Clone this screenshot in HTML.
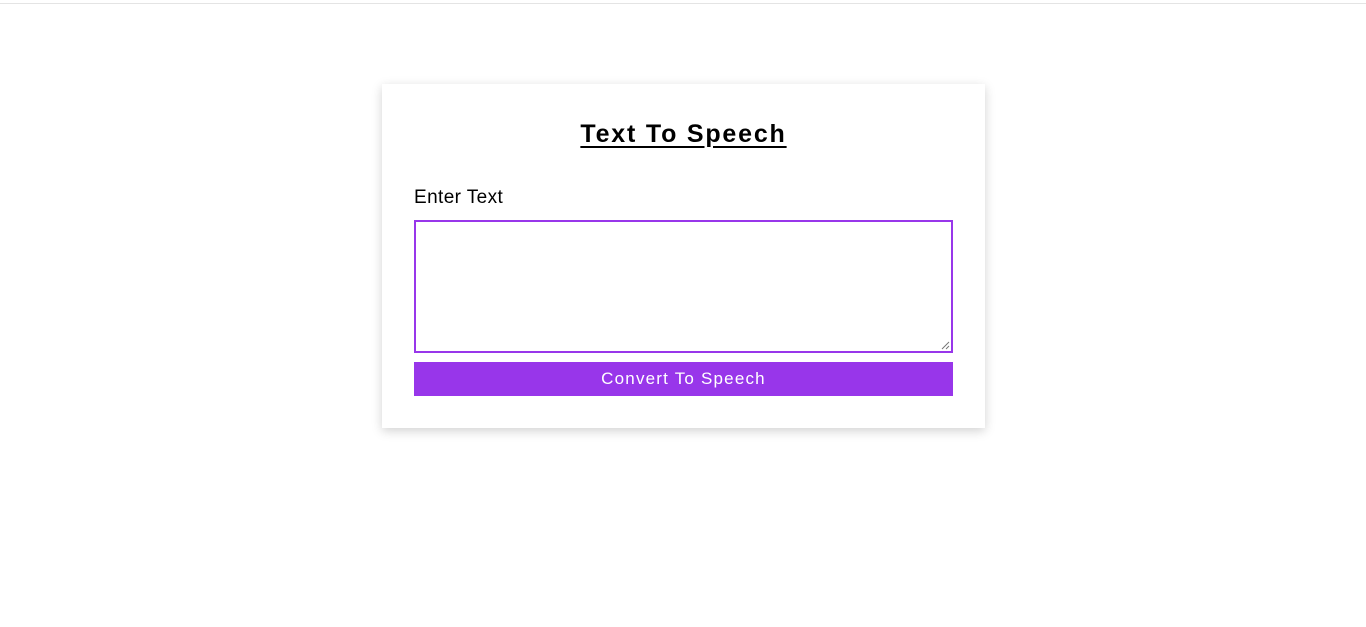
<!DOCTYPE html>
<html><head><style>
html,body{margin:0;padding:0;background:#fff;width:1366px;height:627px;overflow:hidden}
.top{position:absolute;left:0;top:3px;width:1366px;height:1px;background:#e4e4e4}
.card{position:absolute;left:382px;top:84px;width:603px;height:344px;background:#fff;box-shadow:0 3px 10px rgba(0,0,0,0.18)}
h1{position:absolute;width:603px;top:119px;margin:0;text-align:center;font:bold 25px/30px "Liberation Sans",sans-serif;letter-spacing:1.8px;text-decoration:underline;text-underline-offset:4px;color:#000}
.lbl{position:absolute;left:414px;top:187px;font:19px/22px "Liberation Sans",sans-serif;letter-spacing:0.4px;color:#000}
.ta{position:absolute;left:414px;top:220px;width:535px;height:129px;border:2px solid #9836ea}
.btn{position:absolute;left:414px;top:362px;width:539px;height:34px;background:#9836ea;color:#fff;text-align:center;font:17px/34px "Liberation Sans",sans-serif;letter-spacing:1.2px}
</style></head><body>
<div class="top"></div>
<div class="card"></div>
<h1 style="left:382px">Text To Speech</h1>
<div class="lbl">Enter Text</div>
<div class="ta"><svg style="position:absolute;right:1px;bottom:1px" width="9" height="9"><path d="M8 1L1 8M8 5L5 8" stroke="#777" stroke-width="1"/></svg></div>
<div class="btn">Convert To Speech</div>
</body></html>
